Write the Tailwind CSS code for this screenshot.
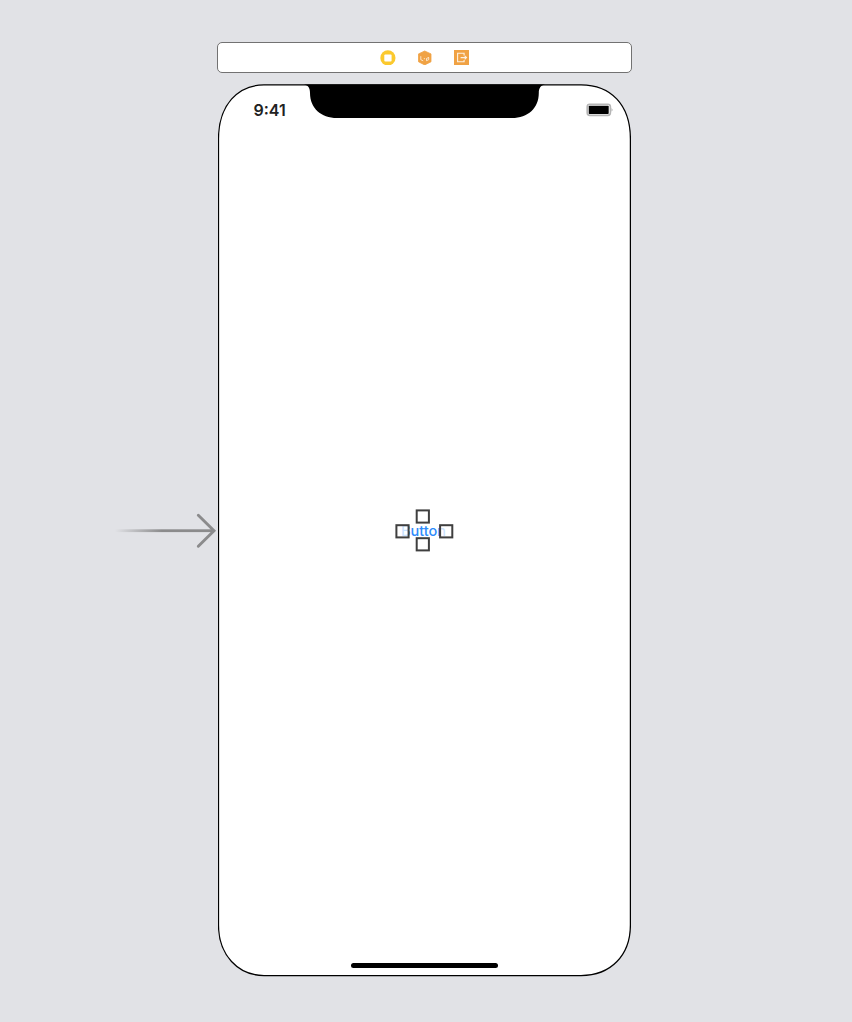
<!DOCTYPE html>
<html lang="en">
<head>
<meta charset="utf-8">
<title>View Controller Scene</title>
<script src="https://cdn.jsdelivr.net/npm/@tailwindcss/browser@4"></script>
</head>
<body class="h-[1022px] w-[852px] overflow-hidden bg-[#e1e2e6] font-['Inter',sans-serif]">
<main class="relative flex flex-col pl-[217px] pt-[42px]">
  <header class="flex h-[31px] w-[415px] items-center justify-center gap-[21px] rounded-[5px] border border-[#727272] bg-white pb-px">
    <svg class="size-4" viewBox="0 0 16 16"><circle cx="7.9" cy="8.9" r="7.6" fill="#fbc92e"/><rect x="4.3" y="5.4" width="7.3" height="7" rx="1" fill="#fff"/></svg>
    <svg class="size-4" viewBox="0 0 16 16"><path d="M7.7 2L14 4.9V12.8L7.7 15.9L1.5 12.8V4.9Z" fill="#f0a244" stroke="#f0a244" stroke-width=".8" stroke-linejoin="round"/><path d="M3.8 7.2V10.7L6.2 11.8M9.5 11.7V9.5L11.7 8.4V10.7L9.5 11.7M6.8 9.7H8" fill="none" stroke="#fff" stroke-opacity=".7"/></svg>
    <svg class="size-4" viewBox="0 0 16 16"><rect x="0" y="1" width="15" height="15" fill="#f0a244"/><path d="M10.1 6.5V4.3H3.6V12.7H10.1V10.9M6.6 8.6H12.4M10.7 6.9L12.5 8.6L10.7 10.3" fill="none" stroke="#fff" stroke-opacity=".85" stroke-width="1.1"/></svg>
  </header>

  <section class="relative mt-[11px] ml-px flex h-[893px] w-[413px] flex-col">
    <svg class="absolute inset-0" width="413" height="893" viewBox="0 0 413 893">
      <path d="M46 .9H363C393 .9 412.4 21 412.4 55V841C412.4 871 393 891.5 363 891.5H46C20 891.5 .5 871 .5 841V55C.5 21 20 .9 46 .9Z" fill="#fff" stroke="#000" stroke-width="1.25"/>
      <path d="M86 .5H327C322.5 1.5 320.8 4 320.8 9C320.8 24 310 34 294 34H119C103 34 92 24 92 9C92 4 90.5 1.5 86 .5Z" fill="#000"/>
    </svg>
    <div class="relative flex h-[51px] items-center justify-between pl-[35.5px] pr-[17px]">
      <span class="text-[16px] font-semibold leading-5 text-[#222]">9:41</span>
      <svg width="28" height="14" viewBox="0 0 28 14"><rect x="1.2" y="1.2" width="23.2" height="11.2" rx="2.6" fill="#fff" stroke="#b5b5b5" stroke-width="1.6"/><rect x="2.7" y="2.7" width="20" height="8.4" rx=".8" fill="#000"/><path d="M25.6 4.8Q27.4 6.8 25.6 8.8Z" fill="#999"/></svg>
    </div>
    <div class="relative flex flex-1 flex-col"></div>
    <div class="relative mb-[9px] h-[5px] w-[147px] self-center rounded-full bg-black"></div>

    <div class="absolute left-[176px] top-[424px] h-[46px] w-[62px]">
      <span class="absolute left-[7px] top-[13px] text-[14.5px] font-medium leading-5 text-[#2e8cfb]">Button</span>
      <svg class="absolute inset-0" width="62" height="46" viewBox="0 0 62 46">
        <g fill="#fff" fill-opacity=".75" stroke="#3f3f3f" stroke-width="2">
          <rect x="2.4" y="17.2" width="12.2" height="12.2"/><rect x="46.1" y="17.2" width="12.2" height="12.2"/>
        </g>
        <g fill="#fff" stroke="#3f3f3f" stroke-width="2">
          <rect x="22.7" y="2.4" width="12.2" height="12.2"/><rect x="22.7" y="30.2" width="12.2" height="12.2"/>
        </g>
      </svg>
    </div>
  </section>

  <svg class="absolute left-[115px] top-[511px]" width="103" height="40" viewBox="0 0 103 40">
    <defs><linearGradient id="fade" x1="0" x2="1"><stop offset="0" stop-color="#8b8b8c" stop-opacity="0"/><stop offset=".48" stop-color="#8b8b8c"/></linearGradient></defs>
    <rect x="0" y="18.3" width="98" height="2.8" fill="url(#fade)"/>
    <path d="M83.3 4.3L99 19.7L83.3 35.2" fill="none" stroke="#8b8b8c" stroke-width="2.9" stroke-linecap="round"/>
  </svg>
</main>
</body>
</html>
